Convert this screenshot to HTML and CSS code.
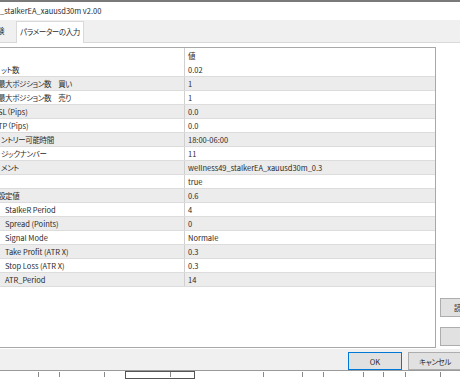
FILE: index.html
```html
<!DOCTYPE html>
<html lang="ja">
<head>
    <meta charset="UTF-8">
    <meta name="viewport" content="width=device-width, initial-scale=1.0">
    <title>stalkerEA パラメーターの入力</title>
    <link rel="stylesheet" href="styles.css">
</head>
<body>
    <div class="dialog">
        <div class="titlebar">_stalkerEA_xauusd30m v2.00</div>
        <div class="tabs">
            <span class="tab tab-cut jp">験</span>
            <span class="tab tab-active jp">パラメーターの入力</span>
        </div>
        <div class="content">
            <div class="grid-box">
                <div class="row head"><span class="name"></span><span class="val jp">値</span></div>
                <div class="row"><span class="name jp">ット数</span><span class="val">0.02</span></div>
                <div class="row alt"><span class="name cut jp">最大ポジション数　買い</span><span class="val">1</span></div>
                <div class="row"><span class="name cut jp">最大ポジション数　売り</span><span class="val">1</span></div>
                <div class="row alt"><span class="name cut">SL（Pips)</span><span class="val">0.0</span></div>
                <div class="row"><span class="name cut">TP（Pips)</span><span class="val">0.0</span></div>
                <div class="row alt"><span class="name jp">ントリー可能時間</span><span class="val">18:00-06:00</span></div>
                <div class="row"><span class="name jp">ジックナンバー</span><span class="val">11</span></div>
                <div class="row alt"><span class="name jp">メント</span><span class="val">wellness49_stalkerEA_xauusd30m_0.3</span></div>
                <div class="row"><span class="name"></span><span class="val">true</span></div>
                <div class="row alt"><span class="name cut jp">設定値</span><span class="val">0.6</span></div>
                <div class="row"><span class="name sub">StalkeR Period</span><span class="val">4</span></div>
                <div class="row alt"><span class="name sub">Spread (Points)</span><span class="val">0</span></div>
                <div class="row"><span class="name sub">Signal Mode</span><span class="val">Normale</span></div>
                <div class="row alt"><span class="name sub">Take Profit (ATR X)</span><span class="val">0.3</span></div>
                <div class="row"><span class="name sub">Stop Loss (ATR X)</span><span class="val">0.3</span></div>
                <div class="row alt"><span class="name sub">ATR_Period</span><span class="val">14</span></div>
            </div>
            <div class="side">
                <button class="side-btn side-load jp">読込み</button>
                <button class="side-btn jp">保存</button>
            </div>
        </div>
        <div class="footer">
            <button class="btn btn-ok">OK</button>
            <button class="btn jp">キャンセル</button>
        </div>
    </div>
    <!-- 後ろのチャート下端 -->
    <svg class="chart-strip" width="460" height="9" viewBox="0 0 460 9">
        <g stroke="#8a8a8a" stroke-width="1">
            <line x1="38.5" y1="1" x2="38.5" y2="6"/>
            <line x1="59.5" y1="1" x2="59.5" y2="6"/>
            <line x1="104.5" y1="1" x2="104.5" y2="6"/>
            <line x1="170.5" y1="1" x2="170.5" y2="6"/>
            <line x1="263.5" y1="1" x2="263.5" y2="6"/>
            <line x1="302.5" y1="1" x2="302.5" y2="6"/>
            <line x1="323.5" y1="1" x2="323.5" y2="6"/>
            <line x1="363.5" y1="1" x2="363.5" y2="6"/>
            <line x1="383.5" y1="1" x2="383.5" y2="6"/>
            <line x1="405.5" y1="1" x2="405.5" y2="6"/>
            <line x1="440.5" y1="1" x2="440.5" y2="6"/>
        </g>
        <rect x="125.5" y="0.5" width="69" height="7" fill="none" stroke="#555"/>
    </svg>
</body>
</html>
```

FILE: styles.css
```css
html, body {margin: 0; overflow: hidden; background: #fff;}
body {width: 460px; height: 380px; font-family: "Noto Sans CJK JP", "Noto Sans", sans-serif; font-size: 7.5px; color: #2a2a2a; font-feature-settings: "palt";}
.jp {letter-spacing: -0.4px;}
.dialog {width: 470px; height: 371px; display: flex; flex-direction: column; border-bottom: 1px solid #9a9a9a; box-sizing: border-box;}

.titlebar {height: 20px; border-top: 2px solid #7a7a7a; box-sizing: border-box; line-height: 18px; white-space: nowrap;}

.tabs {height: 23px; background: #f0f0f0; border-bottom: 1px solid #d9d9d9; box-sizing: border-box; display: flex; align-items: flex-end;}
.tab {height: 21px; line-height: 20px; white-space: nowrap;}
.tab-cut {margin-left: -3px; width: 19px;}
.tab-active {width: 68px; text-align: center; background: #fff; border: 1px solid #d9d9d9; border-bottom: none; box-sizing: border-box; margin-bottom: -1px; height: 22px;}

.content {height: 306px; background: #fff; display: flex; padding-top: 4px; box-sizing: border-box;}
.grid-box {width: 438px; height: 301px; margin-left: -2px; border: 1px solid #a8a8a8; box-sizing: border-box; flex-shrink: 0;}
.row {display: grid; grid-template-columns: 185px 1fr; height: 14px; border-bottom: 1px solid #dcdcdc; box-sizing: border-box; line-height: 13px; white-space: nowrap;}
.row.head {height: 15px; border-bottom: none; line-height: 15px;}
.row.alt {background: #ececec;}
.name {padding-left: 2px; overflow: hidden;}
.name.cut {text-indent: -3px;}
.name.sub {padding-left: 6px;}
.val {border-left: 1px solid #cfcfcf; padding-left: 3px; overflow: hidden;}

.side {width: 60px; flex-shrink: 0; margin-left: 4px; display: flex; flex-direction: column; justify-content: flex-end; gap: 10px; padding-bottom: 3px;}
.side-btn {height: 19px; padding: 0; font: inherit; color: inherit; background: #e1e1e1; border: 1px solid #adadad;}
.side-load {text-align: left; padding-left: 13px;}

.footer {flex: 1; background: #f0f0f0; display: flex; justify-content: flex-end; align-items: flex-start; gap: 6px; padding: 3px 8px 0 0;}
.btn {width: 54px; height: 18px; padding: 0; font: inherit; color: inherit; background: #e1e1e1; border: 1px solid #adadad;}
.btn-ok {border-color: #0078d7;}

.chart-strip {display: block;}
```
